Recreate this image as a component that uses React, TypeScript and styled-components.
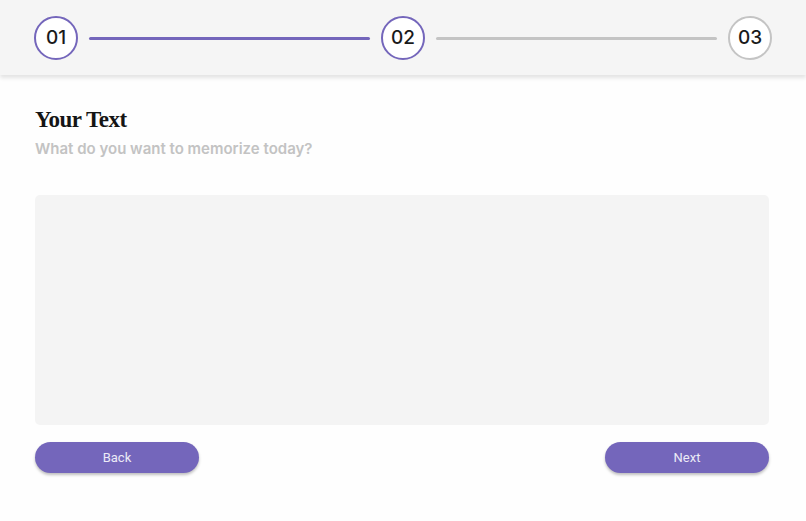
import { Fragment } from 'react';
import styled, { createGlobalStyle } from 'styled-components';

const PURPLE = '#7466bb';
const GREY = '#c4c4c4';

const GlobalStyle = createGlobalStyle`
    html, body {
        margin: 0;
        padding: 0;
        background: #fefefe;
        font-family: Inter, "Noto Sans", sans-serif;
    }
`;

const Page = styled.div`
    width: 806px;
    height: 521px;
    display: flex;
    flex-direction: column;
    background: #fefefe;
`;

const Stepper = styled.header`
    height: 75px;
    background: #f5f5f5;
    box-shadow: 0 3px 4px rgba(0, 0, 0, 0.11);
    display: flex;
    align-items: center;
    padding: 0 34px;
    box-sizing: border-box;
`;

const Step = styled.div<{ $active: boolean }>`
    width: 44px;
    height: 44px;
    box-sizing: border-box;
    border-radius: 50%;
    border: 2.5px solid ${props => props.$active ? PURPLE : GREY};
    background: #ffffff;
    display: flex;
    align-items: center;
    justify-content: center;
    font-size: 19px;
    font-weight: 500;
    color: #1a1a1a;
    flex-shrink: 0;
`;

const Connector = styled.div<{ $active: boolean }>`
    flex: 1;
    height: 3px;
    margin: 1px 11px 0;
    border-radius: 2px;
    background: ${props => props.$active ? PURPLE : GREY};
`;

const Content = styled.main`
    flex: 1;
    display: flex;
    flex-direction: column;
    padding: 30px 37px 0 35px;
`;

const Title = styled.h1`
    margin: 0;
    font-family: "Liberation Serif", "DejaVu Serif", serif;
    font-weight: 700;
    font-size: 23px;
    letter-spacing: -0.5px;
    line-height: 30px;
    color: #151515;
`;

const Subtitle = styled.p`
    margin: 4px 0 0;
    font-size: 15px;
    font-weight: 600;
    color: #c3c3c3;
    line-height: 20px;
`;

const TextBox = styled.textarea`
    margin-top: 36px;
    height: 230px;
    border: none;
    border-radius: 5px;
    background: #f4f4f4;
    resize: none;
    outline: none;
    padding: 12px;
    box-sizing: border-box;
    font-family: inherit;
    font-size: 14px;
`;

const Actions = styled.div`
    display: flex;
    justify-content: space-between;
    margin-top: 17px;
`;

const Button = styled.button`
    width: 164px;
    height: 31px;
    border: none;
    border-radius: 16px;
    background: ${PURPLE};
    color: #ecebf7;
    font-family: Roboto, "Liberation Sans", sans-serif;
    font-size: 13px;
    box-shadow: 0 2px 3px rgba(0, 0, 0, 0.25);
    cursor: pointer;
`;

const steps = ['01', '02', '03'];
const current = 1;

export default function App() {
    return (
        <Page>
            <GlobalStyle />
            <Stepper>
                {steps.map((label, i) => (
                    <Fragment key={label}>
                        {i > 0 && <Connector $active={i <= current} />}
                        <Step $active={i <= current}>{label}</Step>
                    </Fragment>
                ))}
            </Stepper>
            <Content>
                <Title>Your Text</Title>
                <Subtitle>What do you want to memorize today?</Subtitle>
                <TextBox />
                <Actions>
                    <Button>Back</Button>
                    <Button>Next</Button>
                </Actions>
            </Content>
        </Page>
    );
}
